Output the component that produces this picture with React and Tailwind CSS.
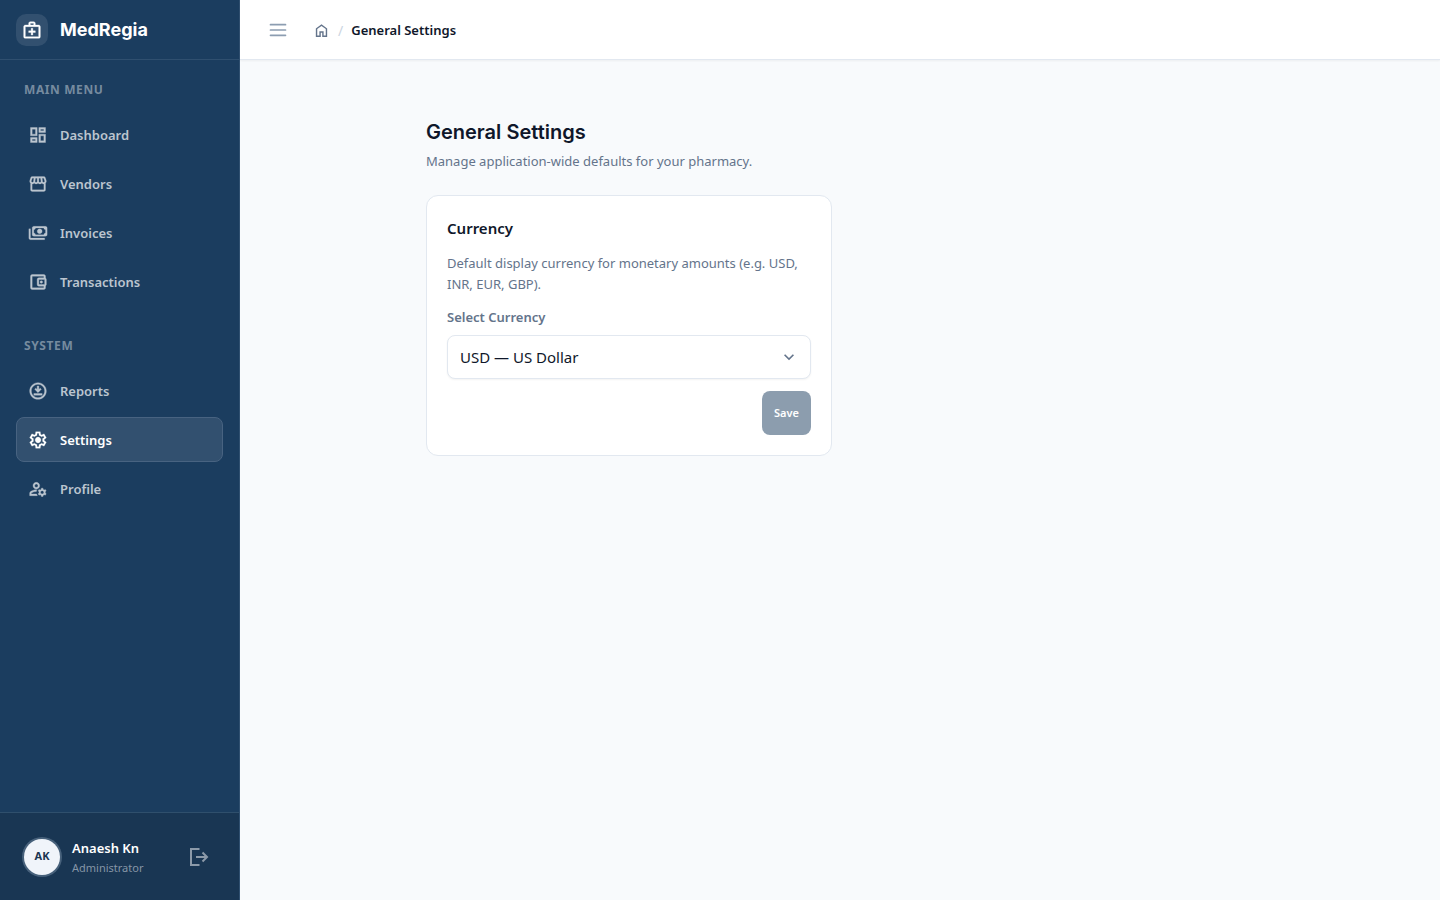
import React, { useState } from 'react';
import {
  MdOutlineMedicalServices,
  MdOutlineDashboard,
  MdOutlineAccountBalanceWallet,
  MdOutlineDownloadForOffline,
  MdOutlineManageAccounts,
  MdKeyboardArrowDown,
} from 'react-icons/md';

const SymbolIcon = ({ d, size = 20, weight = 10 }) => (
  <svg width={size} height={size} viewBox="0 -960 960 960" fill="currentColor" stroke="currentColor" aria-hidden="true">
    <path d={d} strokeWidth={weight} />
  </svg>
);

const StorefrontIcon = () => (
  <SymbolIcon d="M841-518v318q0 33-23.5 56.5T761-120H201q-33 0-56.5-23.5T121-200v-318q-23-21-35.5-54t-.5-72l42-136q8-26 28.5-43t47.5-17h556q27 0 47 16.5t29 43.5l42 136q12 39-.5 71T841-518Zm-272-42q27 0 41-18.5t11-41.5l-22-140h-78v148q0 21 14 36.5t34 15.5Zm-180 0q23 0 37.5-15.5T441-612v-148h-78l-22 140q-4 24 10.5 42t37.5 18Zm-178 0q18 0 31.5-13t16.5-33l22-154h-78l-40 134q-6 20 6.5 43t41.5 23Zm540 0q29 0 42-23t6-43l-42-134h-76l22 154q3 20 16.5 33t31.5 13ZM201-200h560v-282q-5 2-6.5 2H751q-27 0-47.5-9T663-518q-18 18-41 28t-49 10q-27 0-50.5-10T481-518q-17 18-39.5 28T393-480q-29 0-52.5-10T299-518q-21 21-41.5 29.5T211-480h-4.5q-2.5 0-5.5-2v282Z" />
);

const PaymentsIcon = () => (
  <SymbolIcon d="M560-440q-50 0-85-35t-35-85 35-85 85-35 85 35 35 85-35 85-85 35ZM280-320q-33 0-56.5-23.5T200-400v-320q0-33 23.5-56.5T280-800h560q33 0 56.5 23.5T920-720v320q0 33-23.5 56.5T840-320H280Zm80-80h400q0-33 23.5-56.5T840-480v-160q-33 0-56.5-23.5T760-720H360q0 33-23.5 56.5T280-640v160q33 0 56.5 23.5T360-400Zm440 240H120q-33 0-56.5-23.5T40-240v-440h80v440h680v80Z" />
);

const SettingsIcon = () => (
  <SymbolIcon
    d="m370-80-16-128q-13-5-24.5-12T307-235l-119 50L78-375l103-78q-1-7-1-13.5v-27q0-6.5 1-13.5L78-585l110-190 119 50q11-8 23-15t24-12l16-128h220l16 128q13 5 24.5 12t22.5 15l119-50 110 190-103 78q1 7 1 13.5v27q0 6.5-2 13.5l103 78-110 190-118-50q-11 8-23 15t-24 12L590-80H370Zm70-80h79l14-106q31-8 57.5-23.5T639-327l99 41 39-68-86-65q5-14 7-29.5t2-31.5q0-16-2-31.5t-7-29.5l86-65-39-68-99 42q-22-23-48.5-38.5T533-694l-13-106h-79l-14 106q-31 8-57.5 23.5T321-633l-99-41-39 68 86 64q-5 15-7 30t-2 32q0 16 2 31t7 30l-86 65 39 68 99-42q22 23 48.5 38.5T427-266l13 106Zm42-180q58 0 99-41t41-99q0-58-41-99t-99-41q-59 0-99.5 41T342-480q0 58 40.5 99t99.5 41Z"
  />
);

const HomeIcon = () => (
  <SymbolIcon
    size={17}
    weight={0}
    d="M240-200h120v-240h240v240h120v-360L480-740 240-560v360Zm-80 80v-480l320-240 320 240v480H520v-240h-80v240H160Z"
  />
);

const MenuIcon = () => (
  <svg width="24" height="24" viewBox="0 0 24 24" fill="none" stroke="currentColor" strokeWidth="1.7" strokeLinecap="round" aria-hidden="true">
    <path d="M4.5 6.7h15M4.5 12h15M4.5 17.3h15" />
  </svg>
);

const LogoutIcon = () => (
  <svg width="24" height="24" viewBox="0 0 24 24" fill="none" stroke="currentColor" strokeWidth="2" aria-hidden="true">
    <path d="M12.5 4H4v16h8.500M9 12h11M15.500 7.500 20 12l-4.500 4.500" />
  </svg>
);

const menuGroups = [
  {
    title: 'Main Menu',
    items: [
      { name: 'Dashboard', icon: MdOutlineDashboard },
      { name: 'Vendors', icon: StorefrontIcon },
      { name: 'Invoices', icon: PaymentsIcon },
      { name: 'Transactions', icon: MdOutlineAccountBalanceWallet },
    ],
  },
  {
    title: 'System',
    items: [
      { name: 'Reports', icon: MdOutlineDownloadForOffline },
      { name: 'Settings', icon: SettingsIcon },
      { name: 'Profile', icon: MdOutlineManageAccounts },
    ],
  },
];

const currencies = [
  { code: 'USD', label: 'US Dollar' },
  { code: 'INR', label: 'Indian Rupee' },
  { code: 'EUR', label: 'Euro' },
  { code: 'GBP', label: 'British Pound' },
];

const Sidebar = ({ active }) => (
  <aside className="w-60 shrink-0 flex flex-col bg-[#1b3d5f] border-r border-[#305070]">
    <div className="h-15 flex items-center gap-3 px-4 border-b border-[#2f4f6f]">
      <div className="w-8 h-8 rounded-[10px] bg-[#32506f] flex items-center justify-center text-white">
        <MdOutlineMedicalServices size={20} className="[stroke-width:0.4] [&_[fill=none]]:stroke-none" />
      </div>
      <span className="font-['Inter',sans-serif] text-lg font-bold text-white">MedRegia</span>
    </div>
    <nav className="flex-1 px-4 pt-5 flex flex-col gap-8">
      {menuGroups.map((group) => (
        <div key={group.title}>
          <h2 className="px-2 mb-3 text-xs leading-5 font-bold uppercase tracking-wider text-[#768b9f]">{group.title}</h2>
          <ul className="flex flex-col gap-1">
            {group.items.map(({ name, icon: Icon }) => (
              <li key={name}>
                <a
                  href={`#${name.toLowerCase()}`}
                  className={`h-[45px] flex items-center gap-3 px-[11px] rounded-lg border text-[13px] font-semibold ${
                    name === active ? 'bg-[#32506f] border-[#486381] text-white' : 'border-transparent text-[#bbc5cf]'
                  }`}
                >
                  <Icon size={20} className="[stroke-width:0.4] [&_[fill=none]]:stroke-none" />
                  <span className="pt-0.5">{name}</span>
                </a>
              </li>
            ))}
          </ul>
        </div>
      ))}
    </nav>
    <div className="h-22 px-6 flex items-center gap-3 border-t border-[#2f4f6c] bg-[#193653]">
      <div className="w-9 h-9 rounded-full bg-[#f0f4fa] ring-2 ring-[#47617b] flex items-center justify-center text-[11px] font-bold text-[#1b3652]">
        AK
      </div>
      <div className="flex-1 pt-0.5">
        <p className="text-[13px] leading-5 font-semibold text-white">Anaesh Kn</p>
        <p className="text-[11px] leading-5 text-[#8595a6]">Administrator</p>
      </div>
      <button type="button" aria-label="Log out" className="p-1 text-[#8c9aa9]">
        <LogoutIcon />
      </button>
    </div>
  </aside>
);

const Header = ({ title }) => (
  <header className="h-15 shrink-0 flex items-center px-[26px] bg-white border-b border-[#e2e8f0] shadow-xs">
    <button type="button" aria-label="Toggle sidebar" className="text-[#8c9db1]">
      <MenuIcon />
    </button>
    <nav aria-label="Breadcrumb" className="pt-0.5 ml-[23px] flex items-center gap-2 text-[13px]">
      <a href="#home" aria-label="Home" className="text-[#64748b]">
        <HomeIcon />
      </a>
      <span className="text-sm text-[#cbd5e1]">/</span>
      <span className="font-semibold text-[#0f172a]">{title}</span>
    </nav>
  </header>
);

const App = () => {
  const savedCurrency = 'USD';
  const [currency, setCurrency] = useState(savedCurrency);

  return (
    <div className="min-h-screen flex bg-[#f8fafc] font-['Noto_Sans',sans-serif]">
      <Sidebar active="Settings" />
      <div className="flex-1 flex flex-col">
        <Header title="General Settings" />
        <main className="w-full max-w-[876px] mx-auto px-6 pt-14">
          <h1 className="font-['Inter',sans-serif] text-xl leading-8 font-semibold text-[#0f172a]">General Settings</h1>
          <p className="mt-[3px] text-[13px] leading-5 text-[#64748b]">Manage application-wide defaults for your pharmacy.</p>
          <div className="mt-6 grid grid-cols-2 gap-4">
            <section className="p-5 bg-white border border-[#e2e8f0] rounded-xl">
              <h2 className="text-[15px] leading-[25px] font-semibold text-[#0f172a]">Currency</h2>
              <p className="mt-3 text-[13px] leading-[21px] text-[#64748b]">
                Default display currency for monetary amounts (e.g. USD, INR, EUR, GBP).
              </p>
              <label htmlFor="currency" className="block mt-3 text-[13px] leading-5 font-semibold text-[#64748b]">
                Select Currency
              </label>
              <div className="relative mt-2">
                <select
                  id="currency"
                  value={currency}
                  onChange={(e) => setCurrency(e.target.value)}
                  className="w-full h-11 px-3 appearance-none bg-white border border-[#e2e8f0] rounded-lg shadow-xs text-[15px] text-[#0f172a]"
                >
                  {currencies.map((c) => (
                    <option key={c.code} value={c.code}>
                      {c.code} — {c.label}
                    </option>
                  ))}
                </select>
                <MdKeyboardArrowDown size={20} className="absolute right-3 top-3 text-[#64748b] pointer-events-none" />
              </div>
              <div className="mt-3 flex justify-end">
                <button
                  type="button"
                  disabled={currency === savedCurrency}
                  className="h-11 px-3 rounded-lg bg-[#1b3d5f] text-[11px] font-semibold text-white disabled:opacity-50"
                >
                  Save
                </button>
              </div>
            </section>
          </div>
        </main>
      </div>
    </div>
  );
};

export default App;
